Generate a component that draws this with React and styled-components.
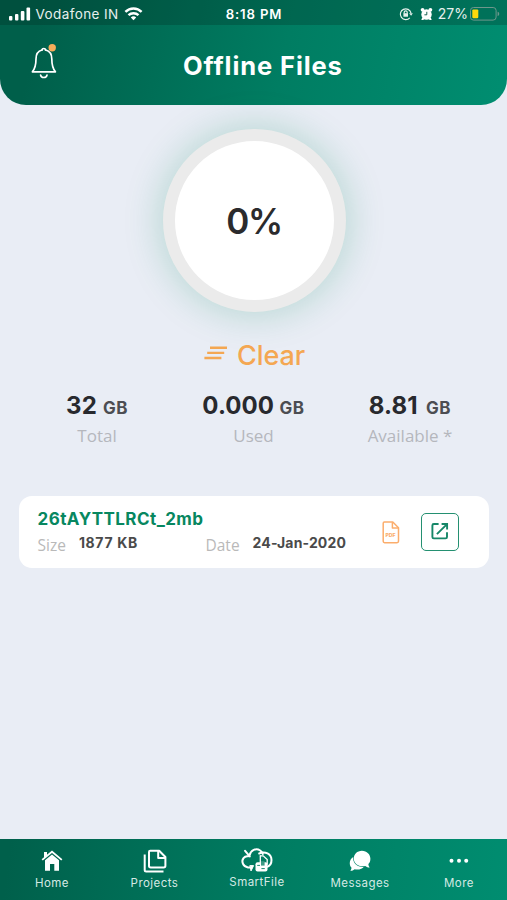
import React from "react";
import styled, { createGlobalStyle } from "styled-components";

const files = [
  { name: "26tAYTTLRCt_2mb", size: "1877 KB", date: "24-Jan-2020" },
];

const stats = [
  { value: "32", label: "Total", width: 154, spacing: 0.4, gap: 0.5 },
  { value: "0.000", label: "Used", width: 159, spacing: 0.1, gap: 0.5 },
  { value: "8.81", label: "Available *", width: 154, spacing: 0.1, gap: 3.5 },
];

function SignalIcon() {
  return (
    <svg width="22" height="14" viewBox="0 0 22 14" fill="#fff">
      <rect x="0" y="9" width="3.4" height="4.5" rx="1" />
      <rect x="6" y="7" width="3.4" height="6.5" rx="1" />
      <rect x="11.8" y="4" width="3.6" height="9.5" rx="1" />
      <rect x="17.5" y="0.5" width="3.6" height="13" rx="1" />
    </svg>
  );
}

function WifiIcon() {
  return (
    <svg width="19" height="14" viewBox="0 0 18 14" fill="none" stroke="#fff" strokeWidth="2.4">
      <path d="M0.9 4.9C5.4 0.3 12.6 0.3 17.1 4.9" />
      <path d="M4 8.2C6.8 5.5 11.2 5.5 14 8.2" />
      <path d="M6.3 10.4C7.8 9 10.2 9 11.7 10.4L9 13.3Z" fill="#fff" stroke="none" />
    </svg>
  );
}

function LockIcon() {
  return (
    <svg width="14" height="14" viewBox="0 0 14 14" fill="none" stroke="#e6f0ed" strokeWidth="1.2">
      <path d="M10.8 10.8A5.4 5.4 0 1 1 12 6" />
      <path d="M10.1 6.2L12.1 8.8L13.8 6.2Z" fill="#e6f0ed" stroke="none" />
      <rect x="4.4" y="6.2" width="4.6" height="3.5" fill="#e6f0ed" stroke="none" />
      <path d="M5.2 6.5V5.3a1.5 1.5 0 0 1 3 0v1.2" />
    </svg>
  );
}

function AlarmIcon() {
  return (
    <svg width="13" height="14" viewBox="0 0 13 14">
      <g fill="#fff">
        <circle cx="6.5" cy="7.5" r="5.2" />
        <circle cx="2.6" cy="2.8" r="1.9" />
        <circle cx="10.4" cy="2.8" r="1.9" />
        <path d="M2.2 10.5L1.3 13h2l1.4-1.6zM10.8 10.5l.9 2.5h-2l-1.4-1.6z" />
      </g>
      <path d="M6.8 4.8V7.8H4.4" fill="none" stroke="#00513f" strokeWidth="0.9" />
    </svg>
  );
}

function BatteryIcon() {
  return (
    <svg width="30" height="14" viewBox="0 0 30 14">
      <rect x="0.5" y="0.5" width="25.6" height="12.6" rx="3" fill="none" stroke="#6e978c" />
      <rect x="2.3" y="2.4" width="6" height="8.9" rx="1.2" fill="#ffd90b" />
      <path d="M27.6 4.7c2.2.7 2.2 3.6 0 4.3z" fill="#6e978c" />
    </svg>
  );
}

function BellIcon() {
  return (
    <svg width="28" height="37" viewBox="0 0 28 37" fill="none" stroke="#fff" strokeWidth="1.7" strokeLinecap="round" strokeLinejoin="round">
      <path d="M12 6c-4.3 1.1-6 4.4-6 8.9 0 6.3-.9 9.4-3.6 12.9h23c-2.7-3.5-3.6-6.6-3.6-12.9 0-4.5-1.9-7.8-6.2-8.9" />
      <path d="M12 6c.3-2 3.3-2 3.6 0" />
      <path d="M10.6 31.1c.5 3.2 5.9 3.2 6.4 0" />
      <circle cx="22.2" cy="3.7" r="3.7" fill="#f7ac5a" stroke="none" />
    </svg>
  );
}

function ClearIcon() {
  return (
    <svg width="24" height="14" viewBox="0 0 24 14" stroke="#f4a752" strokeWidth="2.4">
      <path d="M6 1.8h17M3.2 6.9h17M0.4 12h17" />
    </svg>
  );
}

function PdfIcon() {
  return (
    <svg width="18" height="23" viewBox="0 0 18 23" fill="none" stroke="#fbad6c" strokeWidth="1.5" strokeLinejoin="round">
      <path d="M2.4 1H10.8L16.5 6.7V20.3Q16.5 21.7 15 21.7H2.6Q1.2 21.7 1.2 20.3V2.3Q1.2 1 2.4 1Z" />
      <path d="M10.4 1.2V7H16.3" />
      <text x="3.4" y="16.4" fill="#fbad6c" stroke="none" fontFamily="Inter, sans-serif" fontSize="5.2" fontWeight="800">PDF</text>
    </svg>
  );
}

function OpenIcon() {
  return (
    <svg width="18" height="18" viewBox="0 0 18 18" fill="none" stroke="#168768" strokeWidth="1.9">
      <path d="M7.6 2H2.8Q1.4 2 1.4 3.4V15Q1.4 16.4 2.8 16.4H14.6Q16 16.4 16 15V10.3" />
      <path d="M10.6 2H16.1V7.5M15.8 2.3L5.9 12.2" />
    </svg>
  );
}

function HomeIcon() {
  return (
    <svg width="22" height="22" viewBox="0 0 22 22">
      <path d="M4 10.2L11 4.4l7 5.8V20.8h-4.7v-6.7H9v6.7H4z" fill="#fff" />
      <path d="M3 8.2V2.1h3v3.4z" fill="#fff" />
      <path d="M1.2 9.9L11 1.7l9.8 8.2" fill="none" stroke="#fff" strokeWidth="1.8" />
    </svg>
  );
}

function ProjectsIcon() {
  return (
    <svg width="24" height="24" viewBox="0 0 24 24" fill="none" stroke="#fff" strokeWidth="2" strokeLinejoin="round">
      <path d="M7.2 1.8H16.2L22.4 8V16.7Q22.4 18.4 20.7 18.4H7.7Q6 18.4 6 16.7V3Q6 1.8 7.2 1.8Z" />
      <path d="M15.2 2V9H22.2" />
      <path d="M1.7 5.5V21Q1.7 22.5 3.2 22.5H20.5" />
    </svg>
  );
}

function SmartFileIcon() {
  return (
    <svg width="34" height="26" viewBox="0 0 34 26" fill="none" stroke="#fff" strokeWidth="2" strokeLinecap="round">
      <path d="M11.5 20.4H8C2.8 19.7 1.1 14.2 3.5 11.1c1.4-1.8 3.3-2.1 4.8-1.8" />
      <path d="M5.1 3.8L9.7 9.4M9.6 8.3C10.7 3.1 15.9.7 20.2 3.5c1.3.9 2.2 2 2.6 3.5" />
      <path d="M19.2 6.5c5.9-2.9 12.2.6 12.3 6.4.1 3.6-2 6.3-5.2 7.2" />
      <path d="M10.2 18.6h3.4l-2.4 5z" fill="#fff" strokeWidth="1" />
      <path d="M20.3 8.8H23.2L27.2 12.6V17" strokeWidth="1.3" />
      <path d="M20.3 9V15.5" strokeWidth="1.3" />
      <rect x="15.5" y="15.2" width="12" height="9.4" rx="2" fill="#fff" stroke="none" />
      <path d="M21 14.2h3.6v4.4H21z" fill="#3c9a84" stroke="none" />
      <path d="M17.6 18.4h2M21.8 21.6h2.6" stroke="#007b60" strokeWidth="0.9" />
    </svg>
  );
}

function MessagesIcon() {
  return (
    <svg width="22" height="22" viewBox="0 0 22 22" fill="#fff">
      <path d="M4.3 7.1C-.2 10 .1 15.2 2.4 17.5c.2 1.4-.5 2.5-1.1 3.3 2 .2 3.4-.7 4.3-1.5 4.1 1 8-.7 9-2.4C8.2 17.4 3.4 12.7 4.3 7.1z" />
      <path d="M12.9.8c5 0 8.5 3.7 8.5 8 0 2.5-.8 4.2-2 5.3 0 1.5.6 2.5 1.3 3.4-2 .1-3.5-.8-4.4-1.6C10.4 17.4 4.8 13.8 4.8 8.7 4.8 4.4 8.2.8 12.9.8z" />
    </svg>
  );
}

function MoreIcon() {
  return (
    <svg width="20" height="22" viewBox="0 0 20 22" fill="#fff">
      <circle cx="2.5" cy="10.7" r="2" />
      <circle cx="10" cy="10.7" r="2" />
      <circle cx="17.2" cy="10.7" r="2" />
    </svg>
  );
}

const tabs = [
  { label: "Home", icon: HomeIcon, width: 104 },
  { label: "Projects", icon: ProjectsIcon, width: 101 },
  { label: "SmartFile", icon: SmartFileIcon, width: 104, lift: 1 },
  { label: "Messages", icon: MessagesIcon, width: 102 },
  { label: "More", icon: MoreIcon, width: 96 },
];

export default function App() {
  return (
    <Screen>
      <GlobalStyle />
      <Header>
        <StatusBar>
          <Carrier>
            <SignalIcon />
            <span>Vodafone IN</span>
            <WifiIcon />
          </Carrier>
          <Clock>8:18 PM</Clock>
          <StatusIcons>
            <LockIcon />
            <AlarmIcon />
            <Percent>27%</Percent>
            <BatteryIcon />
          </StatusIcons>
        </StatusBar>
        <TitleBar>
          <BellButton aria-label="Notifications">
            <BellIcon />
          </BellButton>
          <Title>Offline Files</Title>
        </TitleBar>
      </Header>
      <Main>
        <Ring>0%</Ring>
        <ClearButton>
          <ClearIcon />
          <span>Clear</span>
        </ClearButton>
        <Stats>
          {stats.map((stat) => (
            <Stat key={stat.label} $width={stat.width}>
              <StatValue $spacing={stat.spacing}>
                {stat.value} <Unit $gap={stat.gap}>GB</Unit>
              </StatValue>
              <StatLabel>{stat.label}</StatLabel>
            </Stat>
          ))}
        </Stats>
        {files.map((file) => (
          <FileCard key={file.name}>
            <FileInfo>
              <FileName>{file.name}</FileName>
              <Meta>
                <MetaItem $width={168}>
                  <MetaLabel>Size</MetaLabel>
                  <MetaValue $spacing={0.65}>{file.size}</MetaValue>
                </MetaItem>
                <MetaItem>
                  <MetaLabel>Date</MetaLabel>
                  <MetaValue $spacing={0.15}>{file.date}</MetaValue>
                </MetaItem>
              </Meta>
            </FileInfo>
            <PdfIcon />
            <OpenButton aria-label="Open file">
              <OpenIcon />
            </OpenButton>
          </FileCard>
        ))}
      </Main>
      <TabBar>
        {tabs.map(({ label, icon: Icon, width, lift }) => (
          <Tab key={label} $width={width} $lift={lift}>
            <TabIcon>
              <Icon />
            </TabIcon>
            <TabLabel>{label}</TabLabel>
          </Tab>
        ))}
      </TabBar>
    </Screen>
  );
}

const GlobalStyle = createGlobalStyle`
  * {
    box-sizing: border-box;
  }
  body {
    margin: 0;
    background: #e9edf5;
  }
  button {
    padding: 0;
    border: 0;
    background: none;
    font: inherit;
  }
  svg {
    display: block;
    flex-shrink: 0;
  }
`;

const Screen = styled.div`
  display: flex;
  flex-direction: column;
  width: 507px;
  height: 900px;
  overflow: hidden;
  background: #e9edf5;
  font-family: Inter, sans-serif;
  white-space: nowrap;
`;
const Header = styled.header`
  flex: 0 0 105px;
  overflow: hidden;
  border-radius: 0 0 26px 26px;
  background: linear-gradient(102deg, #005f4a 8%, #007d62 56%, #008d70 98%);
`;
const StatusBar = styled.div`
  display: grid;
  grid-template-columns: 1fr auto 1fr;
  align-items: center;
  height: 25px;
  padding: 2px 7px 0 9px;
  background: rgba(0, 35, 27, 0.24);
  color: #e6f0ed;
  font-size: 13.5px;
  line-height: 20px;
`;
const Carrier = styled.div`
  display: flex;
  align-items: center;
  gap: 5px;
  margin-left: -0.5px;
  letter-spacing: 0.4px;
`;
const Clock = styled.div`
  margin-left: -1px;
  color: #fff;
  font-size: 13.2px;
  font-weight: 600;
  letter-spacing: 0.85px;
`;
const StatusIcons = styled.div`
  display: flex;
  align-items: center;
  justify-content: flex-end;
  gap: 7px;
`;
const Percent = styled.span`
  margin: 0 -5px 0 -2px;
  font-size: 14px;
`;
const TitleBar = styled.div`
  display: flex;
  align-items: center;
  height: 80px;
  padding-left: 30px;
`;
const BellButton = styled.button`
  margin-bottom: 6px;
`;
const Title = styled.h1`
  margin: 1px 0 0 125px;
  color: #fff;
  font-size: 25.5px;
  font-weight: 700;
  line-height: 30px;
  letter-spacing: 0.9px;
`;
const Main = styled.main`
  display: flex;
  flex: 1;
  flex-direction: column;
  align-items: center;
`;
const Ring = styled.div`
  display: flex;
  align-items: center;
  justify-content: center;
  width: 183px;
  height: 183px;
  margin: 24px 0 0 1px;
  border: 12px solid #ebebeb;
  border-radius: 50%;
  background: #fff;
  box-shadow: 0 0 36px 3px rgba(0, 137, 85, 0.22);
  color: #2b2b2d;
  font-size: 35px;
  font-weight: 600;
  letter-spacing: -1.3px;
`;
const ClearButton = styled.button`
  display: flex;
  align-items: center;
  gap: 9px;
  height: 34px;
  margin: 26px 0 0 2px;
  color: #f4a752;
  font-size: 27px;
  font-weight: 500;
  letter-spacing: -0.1px;

  svg {
    margin-bottom: 4px;
  }
`;
const Stats = styled.section`
  display: flex;
  width: 467px;
  margin-top: 18px;
`;
const Stat = styled.div`
  width: ${({ $width }) => $width}px;
  text-align: center;
`;
const StatValue = styled.div`
  color: #28292e;
  font-size: 24px;
  font-weight: 700;
  line-height: 32px;
  letter-spacing: ${({ $spacing }) => $spacing}px;
`;
const Unit = styled.span`
  margin-left: ${({ $gap }) => $gap - 1}px;
  color: #4c4d52;
  font-size: 17px;
  font-weight: 700;
  letter-spacing: 0.6px;
`;
const StatLabel = styled.div`
  color: #b5b7bd;
  font-family: "Open Sans", sans-serif;
  font-size: 17px;
  line-height: 24px;
`;
const FileCard = styled.article`
  display: flex;
  align-items: center;
  width: 470px;
  height: 72px;
  margin-top: 48px;
  padding: 0 30px 0 18px;
  border-radius: 13px;
  background: #fff;
`;
const FileInfo = styled.div`
  flex: 1;
  height: 72px;
  padding: 12px 0 0 1px;
`;
const FileName = styled.div`
  color: #078760;
  font-size: 17px;
  font-weight: 700;
  line-height: 23px;
  letter-spacing: 0.45px;
`;
const Meta = styled.div`
  display: flex;
`;
const MetaItem = styled.div`
  display: flex;
  gap: 13px;
  width: ${({ $width }) => ($width ? `${$width}px` : "auto")};
`;
const MetaLabel = styled.span`
  padding-top: 3px;
  color: #b9b9b9;
  font-family: "Open Sans", sans-serif;
  font-size: 15.5px;
  line-height: 22px;
`;
const MetaValue = styled.span`
  color: #4a4a4a;
  font-size: 14px;
  font-weight: 700;
  line-height: 23px;
  letter-spacing: ${({ $spacing }) => $spacing}px;
`;
const OpenButton = styled.button`
  display: flex;
  align-items: center;
  justify-content: center;
  width: 38px;
  height: 38px;
  margin-left: 21px;
  border: 1.5px solid #249071;
  border-radius: 5px;

  svg {
    margin-bottom: 2px;
  }
`;
const TabBar = styled.nav`
  display: flex;
  flex: 0 0 61px;
  background: linear-gradient(97deg, #00604b 2%, #007d62 55%, #008d70 100%);
`;
const Tab = styled.button`
  display: flex;
  flex-direction: column;
  align-items: center;
  width: ${({ $width }) => $width}px;
  padding-top: ${({ $lift = 0 }) => 10 - $lift}px;
`;
const TabIcon = styled.span`
  display: flex;
  align-items: center;
  justify-content: center;
  height: 24px;
`;
const TabLabel = styled.span`
  margin-top: 2px;
  color: #d5e9e4;
  font-size: 11.5px;
  line-height: 16px;
  letter-spacing: 0.45px;
`;
